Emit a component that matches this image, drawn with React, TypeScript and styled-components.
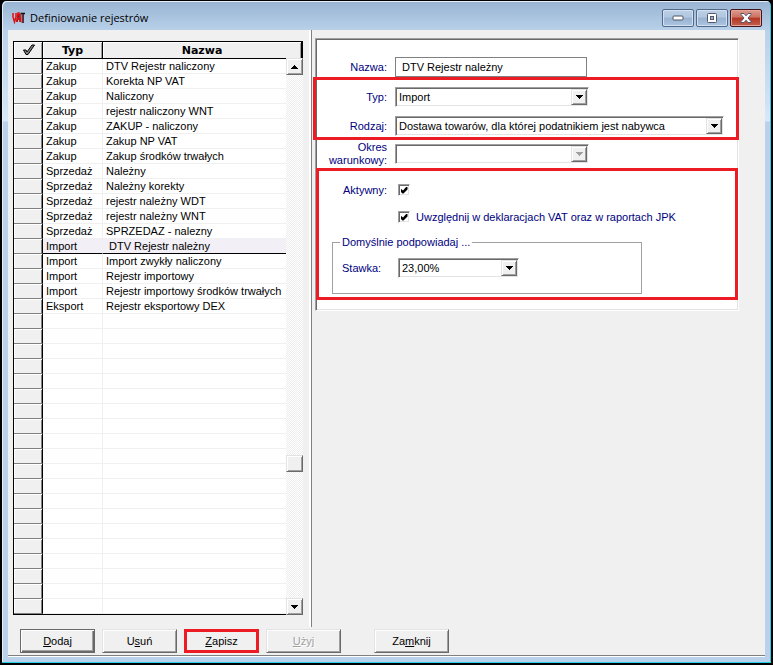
import React from "react";
import styled, { createGlobalStyle, css } from "styled-components";

const GlobalStyle = createGlobalStyle`
  *, *::before, *::after { box-sizing: border-box; }
  body {
    margin: 0;
    background: #000;
    color: #000;
    font: 11px/15px "Liberation Sans", Arial, sans-serif;
  }
  button, input, select { font: inherit; color: inherit; margin: 0; }
`;

const raised = css`
  border: 1px solid;
  border-color: #e3e3e3 #696969 #696969 #e3e3e3;
  box-shadow: inset 1px 1px #fff, inset -1px -1px #a0a0a0;
  background: #f0f0f0;
`;

const sunken = css`
  border: 1px solid;
  border-color: #a0a0a0 #fff #fff #a0a0a0;
  box-shadow: inset 1px 1px #696969, inset -1px -1px #e3e3e3;
  background: #fff;
`;

const Window = styled.div`
  display: flex;
  flex-direction: column;
  min-height: 100vh;
  padding: 0 6px 6px;
  border: 1px solid #000;
  border-width: 1px 2px 2px;
  border-radius: 6px 6px 0 0;
  background: linear-gradient(#98b4d2, #b9d1ea 30px, #cfe2f5 100px, #d8e8f9 120px, #b9d1ea 121px);
  box-shadow: inset -1px -1px #25cfe8, inset 1px 1px #e4eef8;
`;

const TitleBar = styled.header`
  display: flex;
  align-items: center;
  height: 29px;
  flex: none;
  padding: 4px 3px 0 4px;
`;

const Title = styled.h1`
  flex: 1;
  margin: 0 0 0 5px;
  font: 11px/16px "Open Sans", "Noto Sans", sans-serif;
`;

const Caption = styled.div`
  display: flex;
  gap: 2px;
`;

const CaptionButton = styled.button<{ $close?: boolean }>`
  display: grid;
  place-items: center;
  width: 32px;
  height: 18px;
  padding: 0;
  border: 1px solid ${(p) => (p.$close ? "#43141a" : "#52698a")};
  border-radius: 2px;
  box-shadow: inset 0 0 0 1px ${(p) => (p.$close ? "#e5a59a" : "#d2e1f1")};
  background: ${(p) =>
    p.$close
      ? "linear-gradient(#dc9a8e, #cc7363 45%, #b43523 50%, #c4604e)"
      : "linear-gradient(#bdd0e6, #b0c7e0 45%, #98b2d0 50%, #abc5e2)"};
`;

const Client = styled.main`
  flex: 1;
  display: flex;
  flex-direction: column;
  background: #f0f0f0;
  border-bottom: 1px solid #fff;
  box-shadow: inset 0 -1px #7f7f7f;
`;

const Panes = styled.div`
  display: flex;
  flex: 1;
`;

const ListPane = styled.section`
  flex: none;
  width: 304px;
  padding: 11px 8px 12px 5px;
  border-right: 1px solid #808080;
  box-shadow: inset -2px 0 #fff;
`;

const DetailPane = styled.section`
  flex: 1;
  padding: 8px 26px 0 3px;
`;

const Grid = styled.div`
  position: relative;
  border-left: 1px solid #000;
  border-bottom: 1px solid #000;
`;

const Table = styled.table`
  width: 100%;
  table-layout: fixed;
  border-collapse: separate;
  border-spacing: 0;
  background: #fff;
`;

const Th = styled.th<{ $width?: number; $last?: boolean }>`
  width: ${(p) => (p.$width ? `${p.$width}px` : "auto")};
  height: 18px;
  padding: 0;
  border: solid #000;
  border-width: 1px ${(p) => (p.$last ? 2 : 1)}px 1px 0;
  background: #f0f0f0;
  box-shadow: inset 1px 1px #fff, inset -1px 0 #a0a0a0;
  font: bold 11px/15px "DejaVu Sans", sans-serif;
  text-align: center;

  svg { display: block; margin: 0 auto; }
`;

const Selector = styled.td`
  height: 15px;
  padding: 0;
  border-right: 1px solid #000;
  border-bottom: 1px solid #808080;
  background: #f0f0f0;
  box-shadow: inset 1px 1px #fff, inset -1px 0 #808080;
`;

const Cell = styled.td<{ $selected?: boolean; $first?: boolean }>`
  height: 15px;
  padding: 1px 3px 0;
  line-height: 13px;
  white-space: pre;
  border-bottom: 1px solid ${(p) => (p.$selected ? "#000" : "#f0f0f0")};
  border-right: ${(p) => (p.$first ? "1px solid #f0f0f0" : "0")};
  background: ${(p) => (p.$selected ? "#f2eff6" : "#fff")};
`;

const ScrollBar = styled.div`
  position: absolute;
  top: 17px;
  right: 0;
  bottom: -1px;
  width: 17px;
  display: flex;
  flex-direction: column;
  background: repeating-conic-gradient(#ededed 0 25%, #fff 0 50%) 0 0 / 2px 2px;
`;

const ScrollButton = styled.button`
  ${raised}
  display: grid;
  place-items: center;
  flex: none;
  width: 17px;
  height: 17px;
  padding: 0;
`;

const Thumb = styled.div`
  ${raised}
  flex: none;
  height: 17px;
`;

const Track = styled.div<{ $grow: number }>`
  flex: ${(p) => p.$grow} 1 0;
`;

const Panel = styled.form`
  ${sunken}
  padding: 18px 0 16px 1px;
  color: #000080;
`;

const Row = styled.div`
  display: grid;
  grid-template-columns: 70px minmax(0, 1fr);
  grid-template-rows: 20px;
  column-gap: 8px;
  align-items: center;
`;

const Label = styled.label`
  text-align: right;
  line-height: 13px;
`;

const NameInput = styled.input`
  width: 192px;
  height: 20px;
  padding: 0 6px;
  border: 1px solid #808080;
  background: #fff;
  color: #000;
`;

const Marked = styled.div<{ $inset: string }>`
  position: relative;
  display: flex;
  flex-direction: column;

  &::after {
    content: "";
    position: absolute;
    inset: ${(p) => p.$inset};
    border: 3px solid #ed1c24;
    pointer-events: none;
  }
`;

const TypeGroup = styled(Marked)`
  gap: 9px;
  margin: 10px 0 8px;
`;

const OptionsGroup = styled(Marked)`
  margin-top: 20px;
`;

const SelectBox = styled.div<{ $width: number }>`
  ${sunken}
  display: flex;
  width: ${(p) => p.$width}px;
  max-width: 100%;
  height: 20px;
  padding: 1px;
  position: relative;
`;

const Select = styled.select`
  appearance: none;
  flex: 1;
  min-width: 0;
  padding: 0 18px 0 2px;
  border: 0;
  background: transparent;
  color: #000;
  opacity: 1;
`;

const Drop = styled.span`
  ${raised}
  position: absolute;
  top: 1px;
  right: 1px;
  bottom: 1px;
  width: 16px;
  display: grid;
  place-items: center;
  pointer-events: none;
`;

const CheckRow = styled(Row)`
  grid-template-rows: 12px;
  & + & { margin-top: 15px; }
`;

const CheckArea = styled.div`
  display: flex;
  align-items: center;
  gap: 6px;
  height: 12px;
  padding-left: 3px;
`;

const CheckBox = styled.input`
  ${sunken}
  appearance: none;
  flex: none;
  display: grid;
  place-items: center;
  width: 12px;
  height: 12px;

  &:checked::before {
    content: "";
    width: 7px;
    height: 7px;
    background: #000;
    clip-path: polygon(0 28%, 0 71%, 28% 100%, 43% 100%, 100% 43%, 100% 0, 86% 0, 36% 57%);
  }
`;

const DefaultsBox = styled.fieldset`
  width: 310px;
  margin: 12px 0 0 15px;
  padding: 8px 8px 15px 9px;
  border: 1px solid #a0a0a0;
`;

const Legend = styled.legend`
  padding: 0 2px;
  margin-left: -2px;
  line-height: 15px;
`;

const RateRow = styled.div`
  display: grid;
  grid-template-columns: 56px minmax(0, 1fr);
  align-items: center;
`;

const Actions = styled.footer`
  display: flex;
  gap: 7px;
  padding: 2px 12px 3px;
`;

const Button = styled.button<{ $kind?: "default" | "marked" }>`
  ${raised}
  width: 75px;
  height: 24px;
  padding: 0;
  ${(p) =>
    p.$kind === "default" &&
    css`
      border-color: #696969;
      box-shadow: inset 1px 1px #fff, inset -1px -1px #696969, inset -2px -2px #a0a0a0;
    `}
  ${(p) =>
    p.$kind === "marked" &&
    css`
      border: 3px solid #ed1c24;
      box-shadow: none;
    `}
  &:disabled {
    color: #a0a0a0;
    text-shadow: 1px 1px #fff;
  }
`;

const CloseAction = styled(Button)`
  margin-left: 26px;
`;

const Arrow = ({ up, muted }: { up?: boolean; muted?: boolean }) => (
  <svg width="7" height="4" viewBox="0 0 7 4" shapeRendering="crispEdges" aria-hidden="true">
    <path d={up ? "M3 0h1v1h1v1h1v1h1v1H0V3h1V2h1V1h1z" : "M0 0h7v1H6v1H5v1H4v1H3V3H2V2H1V1H0z"} fill={muted ? "#a0a0a0" : "#000"} />
  </svg>
);

const Mark = () => (
  <svg width="13" height="12" viewBox="0 0 13 12" aria-label="VAT">
    <path d="M7 2L5 10M8 2v8M6 7h3" fill="none" stroke="#200" strokeWidth="1" />
    <path d="M1 1v4l1.500 5L4 5V1" fill="none" stroke="#e01010" strokeWidth="1.500" />
    <path d="M4.500 10L6 1h1l1.500 9M5 7h3" fill="none" stroke="#e01010" strokeWidth="1.500" />
    <path d="M8.500 1.500H13M11 1v10" fill="none" stroke="#111" strokeWidth="1.500" />
    <path d="M10 2v9" stroke="#e01010" strokeWidth="1" />
  </svg>
);

const registers: [string, string][] = [
  ["Zakup", "DTV Rejestr naliczony"],
  ["Zakup", "Korekta NP VAT"],
  ["Zakup", "Naliczony"],
  ["Zakup", "rejestr naliczony WNT"],
  ["Zakup", "ZAKUP - naliczony"],
  ["Zakup", "Zakup NP VAT"],
  ["Zakup", "Zakup środków trwałych"],
  ["Sprzedaż", "Należny"],
  ["Sprzedaż", "Należny korekty"],
  ["Sprzedaż", "rejestr należny WDT"],
  ["Sprzedaż", "rejestr należny WNT"],
  ["Sprzedaż", "SPRZEDAZ - nalezny"],
  ["Import", " DTV Rejestr należny"],
  ["Import", "Import zwykły naliczony"],
  ["Import", "Rejestr importowy"],
  ["Import", "Rejestr importowy środków trwałych"],
  ["Eksport", "Rejestr eksportowy DEX"],
];
const selectedIndex = 12;
const visibleRows = 37;
const rows = Array.from({ length: visibleRows }, (_, i) => registers[i] ?? ["", ""]);

function Combo({ id, width, value, options = [value], disabled }: {
  id: string;
  width: number;
  value: string;
  options?: string[];
  disabled?: boolean;
}) {
  return (
    <SelectBox $width={width}>
      <Select id={id} defaultValue={value} disabled={disabled}>
        {options.map((o) => (
          <option key={o}>{o}</option>
        ))}
      </Select>
      <Drop>
        <Arrow muted={disabled} />
      </Drop>
    </SelectBox>
  );
}

function RegisterList() {
  return (
    <Grid>
      <Table>
        <thead>
          <tr>
            <Th $width={29} scope="col">
              <svg width="13" height="12" viewBox="0 0 13 12" aria-label="Wybór">
                <path d="M1.500 6h2.500l1 2 5-7h2.500L6 10.500H4z" fill="#808080" stroke="#000" strokeWidth="1" strokeLinejoin="round" />
              </svg>
            </Th>
            <Th $width={60} scope="col">Typ</Th>
            <Th $last scope="col">Nazwa</Th>
          </tr>
        </thead>
        <tbody>
          {rows.map(([type, name], i) => (
            <tr key={i} aria-selected={i === selectedIndex}>
              <Selector />
              <Cell $first $selected={i === selectedIndex}>{type}</Cell>
              <Cell $selected={i === selectedIndex}>{name}</Cell>
            </tr>
          ))}
        </tbody>
      </Table>
      <ScrollBar>
        <ScrollButton type="button" aria-label="W górę"><Arrow up /></ScrollButton>
        <Track $grow={380} />
        <Thumb />
        <Track $grow={126} />
        <ScrollButton type="button" aria-label="W dół"><Arrow /></ScrollButton>
      </ScrollBar>
    </Grid>
  );
}

function RegisterForm() {
  return (
    <Panel>
      <Row>
        <Label htmlFor="name">Nazwa:</Label>
        <NameInput id="name" defaultValue="DTV Rejestr należny" />
      </Row>
      <TypeGroup $inset="-10px -1px -4px -4px">
        <Row>
          <Label htmlFor="type">Typ:</Label>
          <Combo id="type" width={194} value="Import" options={["Zakup", "Sprzedaż", "Import", "Eksport"]} />
        </Row>
        <Row>
          <Label htmlFor="kind">Rodzaj:</Label>
          <Combo id="kind" width={329} value="Dostawa towarów, dla której podatnikiem jest nabywca" />
        </Row>
      </TypeGroup>
      <Row>
        <Label htmlFor="period">Okres warunkowy:</Label>
        <Combo id="period" width={194} value="" disabled />
      </Row>
      <OptionsGroup $inset="-16px 0 -6px -1px">
        <CheckRow>
          <Label htmlFor="active">Aktywny:</Label>
          <CheckArea>
            <CheckBox id="active" type="checkbox" defaultChecked />
          </CheckArea>
        </CheckRow>
        <CheckRow>
          <span />
          <CheckArea>
            <CheckBox id="declare" type="checkbox" defaultChecked />
            <label htmlFor="declare">Uwzględnij w deklaracjach VAT oraz w raportach JPK</label>
          </CheckArea>
        </CheckRow>
        <DefaultsBox>
          <Legend>Domyślnie podpowiadaj ...</Legend>
          <RateRow>
            <label htmlFor="rate">Stawka:</label>
            <Combo id="rate" width={121} value="23,00%" />
          </RateRow>
        </DefaultsBox>
      </OptionsGroup>
    </Panel>
  );
}

export default function App() {
  return (
    <>
      <GlobalStyle />
      <Window>
        <TitleBar>
          <Mark />
          <Title>Definiowanie rejestrów</Title>
          <Caption>
            <CaptionButton type="button" aria-label="Minimalizuj">
              <svg width="12" height="6" viewBox="0 0 12 6" aria-hidden="true">
                <rect x="1" y="1" width="10" height="4" rx="1" fill="#fff" stroke="#535666" />
              </svg>
            </CaptionButton>
            <CaptionButton type="button" aria-label="Maksymalizuj">
              <svg width="12" height="10" viewBox="0 0 12 10" aria-hidden="true">
                <rect x="1.500" y=".5" width="9" height="9" rx="1" fill="#fff" stroke="#535666" />
                <rect x="4.500" y="3.500" width="3" height="3" fill="#9db6d3" stroke="#535666" />
              </svg>
            </CaptionButton>
            <CaptionButton $close type="button" aria-label="Zamknij okno">
              <svg width="12" height="10" viewBox="0 0 12 10" aria-hidden="true">
                <path d="M1 .5h3l2 2.300L8 .5h3v1L8 5l3 3.500v1H8L6 7.200 4 9.500H1v-1L4 5 1 1.500z" fill="#fff" stroke="#535666" />
              </svg>
            </CaptionButton>
          </Caption>
        </TitleBar>
        <Client>
          <Panes>
            <ListPane>
              <RegisterList />
            </ListPane>
            <DetailPane>
              <RegisterForm />
            </DetailPane>
          </Panes>
          <Actions>
            <Button type="button" $kind="default"><span><u>D</u>odaj</span></Button>
            <Button type="button"><span>U<u>s</u>uń</span></Button>
            <Button type="button" $kind="marked"><span><u>Z</u>apisz</span></Button>
            <Button type="button" disabled><span><u>U</u>żyj</span></Button>
            <CloseAction type="button"><span>Za<u>m</u>knij</span></CloseAction>
          </Actions>
        </Client>
      </Window>
    </>
  );
}
